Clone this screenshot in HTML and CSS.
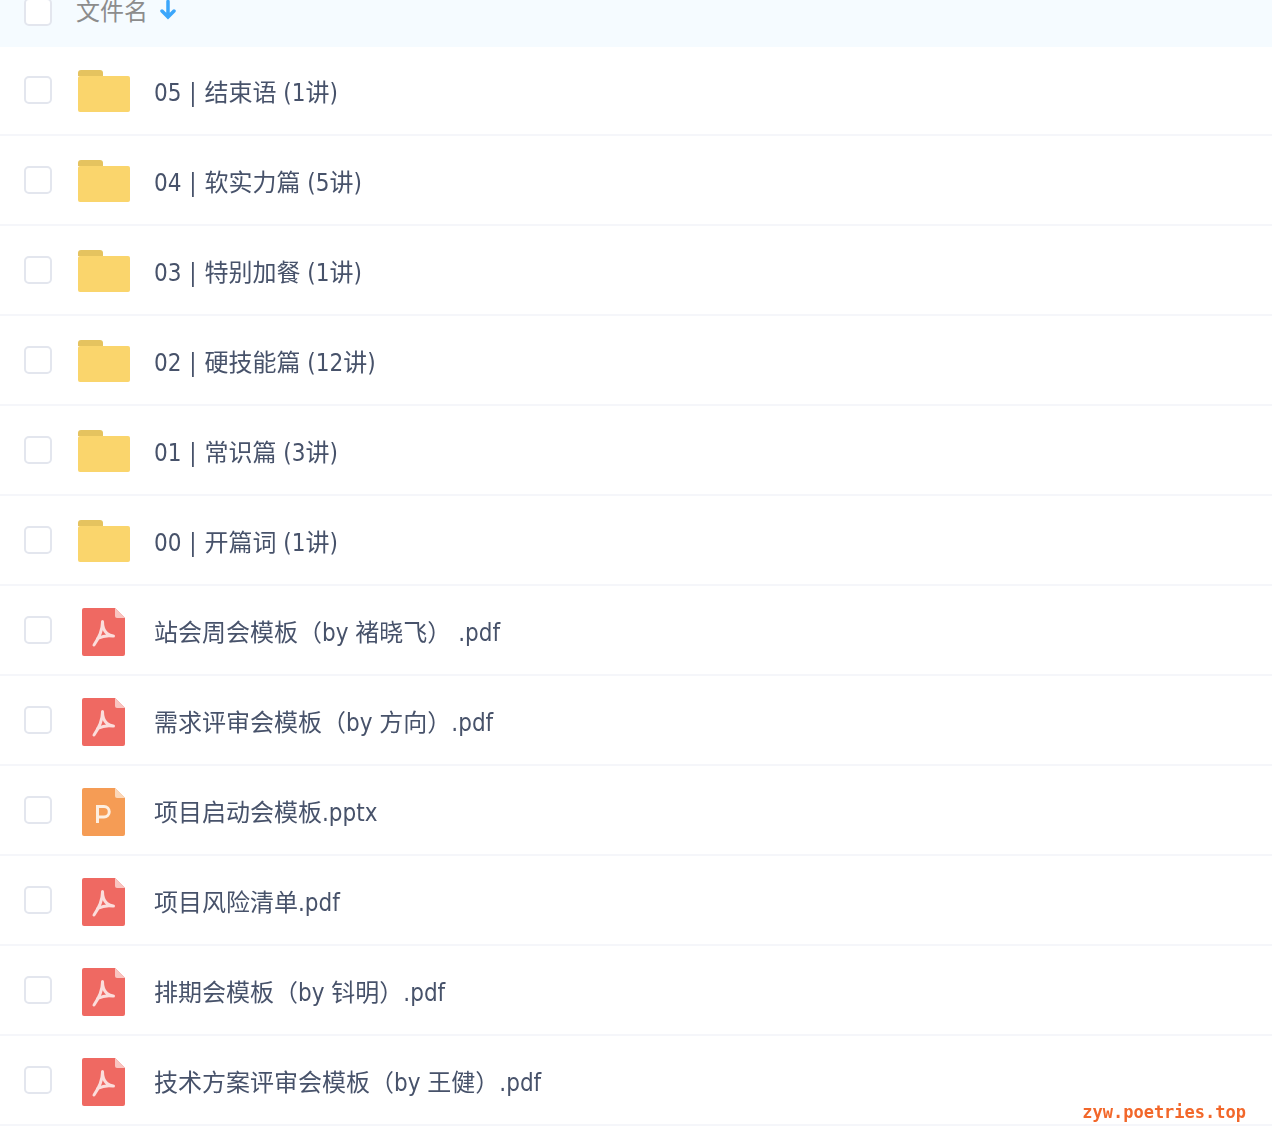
FILE: index.html
```html
<!DOCTYPE html>
<html lang="zh-CN">
<head>
    <meta charset="UTF-8">
    <meta name="viewport" content="width=device-width, initial-scale=1.0">
    <title>文件列表</title>
    <link rel="stylesheet" href="styles.css">
</head>
<body>

<svg class="icon-defs" width="0" height="0">
    <symbol id="folder" viewBox="0 0 52 42">
        <path d="M0 3a3 3 0 0 1 3-3h19a3 3 0 0 1 3 3v3H0z" fill="#e5c35f"/>
        <path d="M0 8a2 2 0 0 1 2-2h48a2 2 0 0 1 2 2v32a2 2 0 0 1-2 2H2a2 2 0 0 1-2-2z" fill="#fad56c"/>
    </symbol>
    <symbol id="pdf" viewBox="0 0 43 48">
        <path d="M2 0h31l10 10v36a2 2 0 0 1-2 2H2a2 2 0 0 1-2-2V2a2 2 0 0 1 2-2z" fill="#ef6962"/>
        <path d="M33 0l10 10h-8a2 2 0 0 1-2-2z" fill="#f9c4c0"/>
        <path d="M20.500 13.500c0 5 1 9 4.500 12 2 1.700 4 2.500 6.500 2.500M20.500 14c0 7-3 15-8.500 23M15.500 30.500c5-2.500 10-3.500 15.500-2.500" fill="none" stroke="#fbdedc" stroke-width="3" stroke-linecap="round"/>
    </symbol>
    <symbol id="ppt" viewBox="0 0 43 48">
        <path d="M2 0h31l10 10v36a2 2 0 0 1-2 2H2a2 2 0 0 1-2-2V2a2 2 0 0 1 2-2z" fill="#f59c55"/>
        <path d="M33 0l10 10h-8a2 2 0 0 1-2-2z" fill="#fbd7b9"/>
        <path d="M15.500 35V18.500H22a5.250 5.250 0 0 1 0 10.500h-6.500" fill="none" stroke="#fdeee0" stroke-width="3"/>
    </symbol>
</svg>

<div class="file-list">
    <div class="row header-row">
        <span class="checkbox"></span>
        <span class="header-name">文件名</span>
        <svg class="sort-arrow" viewBox="0 0 16 20" width="16" height="20">
            <path d="M8 1.500v15M2 11l6 6 6-6" fill="none" stroke="#3ba6fb" stroke-width="3.500" stroke-linecap="round"/>
        </svg>
    </div>

    <div class="row">
        <span class="checkbox"></span>
        <span class="file-icon"><svg class="icon-folder"><use href="#folder"/></svg></span>
        <span class="file-name">05 <span class="sep">|</span> 结束语 (1讲)</span>
    </div>
    <div class="row">
        <span class="checkbox"></span>
        <span class="file-icon"><svg class="icon-folder"><use href="#folder"/></svg></span>
        <span class="file-name">04 <span class="sep">|</span> 软实力篇 (5讲)</span>
    </div>
    <div class="row">
        <span class="checkbox"></span>
        <span class="file-icon"><svg class="icon-folder"><use href="#folder"/></svg></span>
        <span class="file-name">03 <span class="sep">|</span> 特别加餐 (1讲)</span>
    </div>
    <div class="row">
        <span class="checkbox"></span>
        <span class="file-icon"><svg class="icon-folder"><use href="#folder"/></svg></span>
        <span class="file-name">02 <span class="sep">|</span> 硬技能篇 (12讲)</span>
    </div>
    <div class="row">
        <span class="checkbox"></span>
        <span class="file-icon"><svg class="icon-folder"><use href="#folder"/></svg></span>
        <span class="file-name">01 <span class="sep">|</span> 常识篇 (3讲)</span>
    </div>
    <div class="row">
        <span class="checkbox"></span>
        <span class="file-icon"><svg class="icon-folder"><use href="#folder"/></svg></span>
        <span class="file-name">00 <span class="sep">|</span> 开篇词 (1讲)</span>
    </div>
    <div class="row">
        <span class="checkbox"></span>
        <span class="file-icon"><svg class="icon-doc"><use href="#pdf"/></svg></span>
        <span class="file-name">站会周会模板（by 褚晓飞） .pdf</span>
    </div>
    <div class="row">
        <span class="checkbox"></span>
        <span class="file-icon"><svg class="icon-doc"><use href="#pdf"/></svg></span>
        <span class="file-name">需求评审会模板（by 方向）.pdf</span>
    </div>
    <div class="row">
        <span class="checkbox"></span>
        <span class="file-icon"><svg class="icon-doc"><use href="#ppt"/></svg></span>
        <span class="file-name">项目启动会模板.pptx</span>
    </div>
    <div class="row">
        <span class="checkbox"></span>
        <span class="file-icon"><svg class="icon-doc"><use href="#pdf"/></svg></span>
        <span class="file-name">项目风险清单.pdf</span>
    </div>
    <div class="row">
        <span class="checkbox"></span>
        <span class="file-icon"><svg class="icon-doc"><use href="#pdf"/></svg></span>
        <span class="file-name">排期会模板（by 钭明）.pdf</span>
    </div>
    <div class="row">
        <span class="checkbox"></span>
        <span class="file-icon"><svg class="icon-doc"><use href="#pdf"/></svg></span>
        <span class="file-name">技术方案评审会模板（by 王健）.pdf</span>
    </div>
</div>

<div class="watermark">zyw.poetries.top</div>

</body>
</html>
```

FILE: styles.css
```css
html, body {
    margin: 0;
    padding: 0;
    height: 1148px;
    overflow: hidden;
    background-color: #ffffff;
}

body {
    position: relative;
    font-family: "DejaVu Sans", "Noto Sans CJK SC", sans-serif;
    font-stretch: condensed;
    font-size: 24px;
    color: #47526a;
}

.icon-defs {
    position: absolute;
}

/* page is scrolled, the header is cut off at the top */
.file-list {
    margin-top: -44px;
    filter: blur(0.5px); /* the capture is slightly soft */
}

.row {
    display: flex;
    align-items: center;
    box-sizing: border-box;
    height: 90px;
    padding-left: 24px;
    border-bottom: 2px solid #f5f6fa;
}

.header-row {
    height: 91px;
    margin-bottom: -1px;
    padding-top: 21px;
    background-color: #f5fbff;
    border-bottom: none;
    color: #8c8c8c;
}

.checkbox {
    box-sizing: border-box;
    flex: none;
    width: 28px;
    height: 28px;
    border: 2px solid #e3e6ee;
    border-radius: 5px;
    background-color: #ffffff;
}

.header-name {
    margin-left: 24px;
    padding-bottom: 5px;
}

.sort-arrow {
    margin-left: 12px;
    margin-bottom: 4px;
}

.file-icon {
    display: flex;
    flex: none;
    width: 52px;
    margin-left: 26px;
    margin-right: 24px;
}

.icon-folder {
    width: 52px;
    height: 42px;
    margin-top: 2px;
}

.icon-doc {
    width: 43px;
    height: 48px;
    margin-top: 4px;
    margin-left: 4px;
}

.file-name {
    white-space: nowrap;
}

.sep {
    margin: 0 1px;
}

.watermark {
    position: absolute;
    right: 26px;
    top: 1100px;
    font-family: "DejaVu Sans Mono", monospace;
    font-stretch: normal;
    font-size: 17px;
    font-weight: bold;
    line-height: 24px;
    color: #f2672a;
}
```
